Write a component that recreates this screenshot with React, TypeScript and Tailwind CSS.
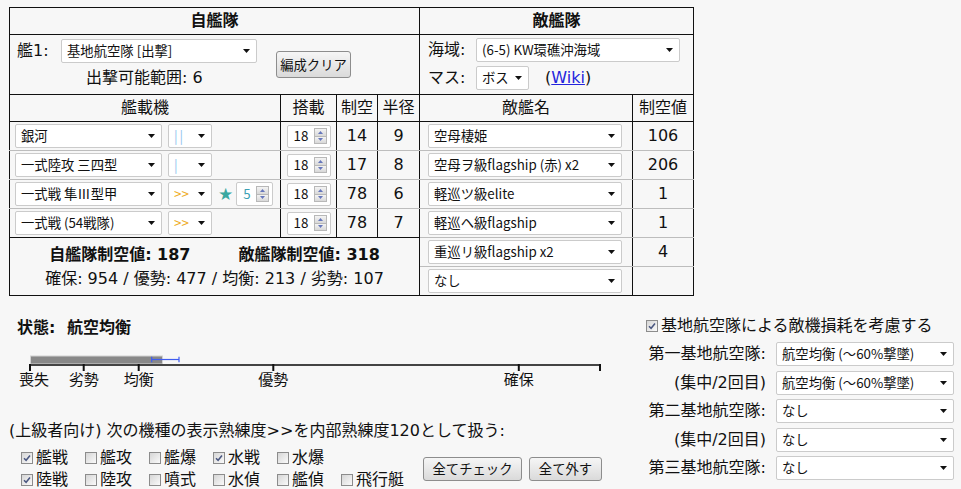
import React from 'react';

const MAIN = "font-['DejaVu_Sans','Noto_Sans_CJK_JP',sans-serif]";
const UI = "font-['Noto_Sans_CJK_JP',sans-serif]";

const Arrow: React.FC = () => (
  <svg width="7" height="4" viewBox="0 0 7 4" className="shrink-0">
    <path d="M0 0H7L3.5 4Z" fill="#111" />
  </svg>
);

type SelProps = { className: string; children?: React.ReactNode };

const Select: React.FC<SelProps> = ({ className, children }) => (
  <div
    className={`flex items-center justify-between bg-white border border-[#cbcbcb] rounded-[2px] pl-[5px] pr-[6px] text-[13.33px] text-[#111] ${UI} ${className}`}
  >
    <span className="whitespace-nowrap leading-[18px]">{children}</span>
    <Arrow />
  </div>
);

const SpinArrow: React.FC<{ up?: boolean }> = ({ up }) => (
  <div className="flex-1 flex items-center justify-center bg-linear-to-b from-[#f4f4f4] to-[#d8d8d8]">
    <svg width="5" height="3" viewBox="0 0 5 3">
      <path d={up ? 'M0 3L2.5 0L5 3Z' : 'M0 0L2.5 3L5 0Z'} fill="#6677bb" />
    </svg>
  </div>
);

const Spinner: React.FC<{ value: string; className: string; valueClass?: string }> = ({
  value,
  className,
  valueClass = 'text-[#111]',
}) => (
  <div className={`flex items-center bg-white border border-[#cbcbcb] rounded-[2px] pl-[6px] pr-[3px] ${UI} ${className}`}>
    <span className={`flex-1 text-[13.33px] leading-[18px] ${valueClass}`}>{value}</span>
    <div className="flex flex-col gap-px w-[13px] h-[16px] border border-[#b8b8b8] bg-[#b8b8b8]">
      <SpinArrow up />
      <SpinArrow />
    </div>
  </div>
);

const Check: React.FC<{ on?: boolean }> = ({ on }) => (
  <span className="inline-flex items-center justify-center w-[12px] h-[12px] shrink-0 border border-[#8c8c8c] bg-linear-to-br from-[#d6d6d6] to-[#fafafa]">
    {on && (
      <svg width="8" height="8" viewBox="0 0 8 8">
        <path d="M1 4.2L3.1 6.3L7 1.5" fill="none" stroke="#4a5780" strokeWidth="1.5" />
      </svg>
    )}
  </span>
);

const Button: React.FC<{ className: string; children: React.ReactNode }> = ({ className, children }) => (
  <button
    className={`flex items-center justify-center border border-[#8d8d8d] rounded-[3px] bg-linear-to-b from-[#f6f6f6] to-[#dadada] text-[13.33px] text-[#111] leading-[18px] ${UI} ${className}`}
  >
    {children}
  </button>
);

const planes = [
  { name: '銀河', prof: '||', profClass: 'text-[#93c5ee] tracking-[2px]', star: false, air: '14', range: '9' },
  { name: '一式陸攻 三四型', prof: '|', profClass: 'text-[#93c5ee]', star: false, air: '17', range: '8' },
  { name: '一式戦 隼Ⅲ型甲', prof: '>>', profClass: 'text-[#eeaa22]', star: true, air: '78', range: '6' },
  { name: '一式戦 (54戦隊)', prof: '>>', profClass: 'text-[#eeaa22]', star: false, air: '78', range: '7' },
];

const enemies = [
  { name: '空母棲姫', air: '106' },
  { name: '空母ヲ級flagship (赤) x2', air: '206' },
  { name: '軽巡ツ級elite', air: '1' },
  { name: '軽巡ヘ級flagship', air: '1' },
  { name: '重巡リ級flagship x2', air: '4' },
  { name: 'なし', air: '' },
];

const row1 = [
  { label: '艦戦', on: true },
  { label: '艦攻', on: false },
  { label: '艦爆', on: false },
  { label: '水戦', on: true },
  { label: '水爆', on: false },
];
const row2 = [
  { label: '陸戦', on: true },
  { label: '陸攻', on: false },
  { label: '噴式', on: false },
  { label: '水偵', on: false },
  { label: '艦偵', on: false },
  { label: '飛行艇', on: false },
];

const bases = [
  ['第一基地航空隊:', '航空均衡 (～60%撃墜)'],
  ['(集中/2回目)', '航空均衡 (～60%撃墜)'],
  ['第二基地航空隊:', 'なし'],
  ['(集中/2回目)', 'なし'],
  ['第三基地航空隊:', 'なし'],
];

const ticks = [
  { x: 21, label: '喪失', lx: 25 },
  { x: 74.7, label: '劣勢', lx: 74.7 },
  { x: 129.7, label: '均衡', lx: 129.7 },
  { x: 264.3, label: '優勢', lx: 264.3 },
  { x: 509.8, label: '確保', lx: 509.8 },
  { x: 591, label: '', lx: 591 },
];

const EnemyCells: React.FC<{ i: number }> = ({ i }) => {
  const e = enemies[i];
  const bottom = i === enemies.length - 1 ? 'border-b-[#111]' : 'border-b-[#bdbdbd]';
  return (
    <>
      <td className={`h-[29px] border border-[#111] border-t-[#bdbdbd] ${bottom}`}>
        <div className="pl-[8px]">
          <Select className="w-[194px] h-[24px]">{e.name}</Select>
        </div>
      </td>
      <td className={`text-center border border-[#111] border-t-[#bdbdbd] ${bottom}`}>{e.air}</td>
    </>
  );
};

export default function App() {
  return (
    <div
      className={`w-[961px] h-[489px] overflow-hidden bg-[#f7f7f7] text-[#111] text-[16px] leading-[22px] pl-[9px] pt-[7px] ${MAIN}`}
    >
      <table className="table-fixed w-[684px] border border-[#111]">
        <colgroup>
          <col className="w-[271px]" />
          <col className="w-[56px]" />
          <col className="w-[41px]" />
          <col className="w-[42px]" />
          <col className="w-[213px]" />
          <col className="w-[61px]" />
        </colgroup>
        <tbody>
          <tr>
            <td colSpan={4} className="h-[27px] border border-[#111] text-center font-bold">
              自艦隊
            </td>
            <td colSpan={2} className="border border-[#111] text-center font-bold">
              敵艦隊
            </td>
          </tr>
          <tr>
            <td colSpan={4} className="h-[60px] border border-[#111] align-top">
              <div className="flex items-start pl-[7px] pt-[4px]">
                <div className="w-[240px]">
                  <div className="flex items-center">
                    <span className="w-[44px]">艦1:</span>
                    <Select className="w-[196px] h-[24px]">基地航空隊 [出撃]</Select>
                  </div>
                  <div className="mt-[5px] pl-[69px] leading-[20px]">出撃可能範囲: 6</div>
                </div>
                <Button className="mt-[12px] ml-[19px] w-[75px] h-[27px]">編成クリア</Button>
              </div>
            </td>
            <td colSpan={2} className="border border-[#111] align-top">
              <div className="pl-[8px] pt-[3px]">
                <div className="flex items-center">
                  <span className="w-[48px]">海域:</span>
                  <Select className="w-[204px] h-[24px]">(6-5) KW環礁沖海域</Select>
                </div>
                <div className="flex items-center mt-[4px]">
                  <span className="w-[48px]">マス:</span>
                  <Select className="w-[53px] h-[24px]">ボス</Select>
                  <span className="ml-[16px]">
                    (<a className="text-[#2424dd] underline">Wiki</a>)
                  </span>
                </div>
              </div>
            </td>
          </tr>
          <tr className="text-center">
            <td className="h-[27px] border border-[#111]">艦載機</td>
            <td className="border border-[#111]">搭載</td>
            <td className="border border-[#111]">制空</td>
            <td className="border border-[#111]">半径</td>
            <td className="border border-[#111]">敵艦名</td>
            <td className="border border-[#111]">制空値</td>
          </tr>
          {planes.map((p, i) => {
            const bottom = i === planes.length - 1 ? 'border-b-[#111]' : 'border-b-[#bdbdbd]';
            const cell = `border border-[#111] border-t-[#bdbdbd] ${bottom}`;
            return (
              <tr key={p.name}>
                <td className={`h-[29px] ${cell}`}>
                  <div className="flex items-center pl-[5px]">
                    <Select className="w-[147px] h-[24px]">{p.name}</Select>
                    <Select className="ml-[6px] w-[44px] h-[24px]">
                      <span className={p.profClass}>{p.prof}</span>
                    </Select>
                    {p.star && (
                      <>
                        <span className="ml-[6px] text-[17px] leading-[18px] text-[#3aa8a0]">★</span>
                        <Spinner value="5" className="ml-[3px] w-[37px] h-[24px]" valueClass="text-[#3b9fb3]" />
                      </>
                    )}
                  </div>
                </td>
                <td className={cell}>
                  <div className="flex justify-center">
                    <Spinner value="18" className="w-[44px] h-[23px]" />
                  </div>
                </td>
                <td className={`text-center ${cell}`}>{p.air}</td>
                <td className={`text-center ${cell}`}>{p.range}</td>
                <EnemyCells i={i} />
              </tr>
            );
          })}
          <tr>
            <td colSpan={4} rowSpan={2} className="border border-[#111]">
              <div className="flex justify-center gap-[48px] font-bold leading-[24px]">
                <span>自艦隊制空値: 187</span>
                <span>敵艦隊制空値: 318</span>
              </div>
              <div className="text-center leading-[24px]">確保: 954 / 優勢: 477 / 均衡: 213 / 劣勢: 107</div>
            </td>
            <EnemyCells i={4} />
          </tr>
          <tr>
            <EnemyCells i={5} />
          </tr>
        </tbody>
      </table>

      <div className="flex mt-[19px]">
        <div className="w-[637px] pt-[2px]">
          <div className="flex font-bold pl-[8px]">
            <span className="w-[50px]">状態:</span>
            <span>航空均衡</span>
          </div>
          <svg width="610" height="42" className="block mt-[11px]">
            <rect x="21.5" y="6" width="132" height="8" fill="#888" stroke="#d2d2d2" />
            <line x1="21" y1="15" x2="592" y2="15" stroke="#444" strokeWidth="2" />
            {ticks.map((t) => (
              <line key={t.x} x1={t.x} y1="14" x2={t.x} y2="21" stroke="#111" strokeWidth="2" />
            ))}
            <g stroke="#3f5cf0" strokeWidth="1.2">
              <line x1="142.7" y1="9.5" x2="170" y2="9.5" />
              <line x1="142.7" y1="6.7" x2="142.7" y2="12.3" />
              <line x1="170" y1="6.7" x2="170" y2="12.3" />
            </g>
            {ticks.map((t) =>
              t.label ? (
                <text key={t.label} x={t.lx} y="35" textAnchor="middle" fontSize="15" fill="#111">
                  {t.label}
                </text>
              ) : null
            )}
          </svg>
          <div className="mt-[28px]">(上級者向け) 次の機種の表示熟練度&gt;&gt;を内部熟練度120として扱う:</div>
          <div className="flex items-center mt-[5px] pl-[12px]">
            <div className="grid grid-cols-[repeat(6,64px)]">
              {row1.map((c) => (
                <div key={c.label} className="flex items-center">
                  <Check on={c.on} />
                  <span className="ml-[3px]">{c.label}</span>
                </div>
              ))}
              <span />
              {row2.map((c) => (
                <div key={c.label} className="flex items-center">
                  <Check on={c.on} />
                  <span className="ml-[3px]">{c.label}</span>
                </div>
              ))}
            </div>
            <Button className="ml-[18px] w-[99px] h-[24px]">全てチェック</Button>
            <Button className="ml-[7px] w-[73px] h-[24px]">全て外す</Button>
          </div>
        </div>

        <div className="w-[310px]">
          <div className="flex items-center">
            <Check on />
            <span className="ml-[3px]">基地航空隊による敵機損耗を考慮する</span>
          </div>
          <div className="mt-[3px]">
            {bases.map(([label, val], i) => (
              <div key={i} className="flex items-center h-[28.5px]">
                <span className="w-[120px] text-right">{label}</span>
                <Select className="ml-[10px] w-[178px] h-[24px]">{val}</Select>
              </div>
            ))}
          </div>
        </div>
      </div>
    </div>
  );
}
